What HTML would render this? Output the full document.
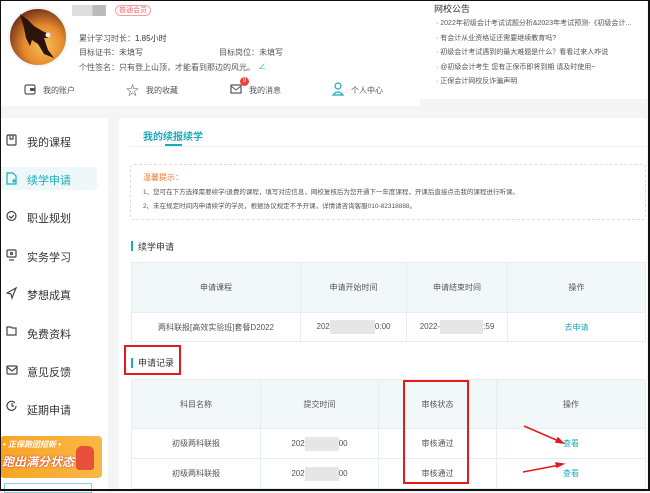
<!DOCTYPE html>
<html><head><meta charset="utf-8"><style>
*{margin:0;padding:0;box-sizing:border-box}
body{width:650px;height:491px;overflow:hidden;background:#f4f5f7;font-family:"Liberation Sans","Noto Sans CJK SC",sans-serif;position:relative;color:#333}
.a{position:absolute}
.t{position:absolute;white-space:nowrap}
.s9{font-size:8px;color:#555}
.tbl{position:absolute;border-collapse:collapse;font-size:8px;color:#555;text-align:center}
.tbl td{border:1px solid #e8eef0}
.tbl tr.h td{background:#f2f8fa}
.blur{display:inline-block;background:#e6e6e6;height:14px;vertical-align:middle}
.side{font-size:11px;color:#333}
</style></head><body>
<!-- header -->
<div class="a" style="left:0;top:0;width:420px;height:106px;background:#fff"></div>
<div class="a" style="left:420px;top:0;width:227px;height:99px;background:#fff"></div>
<div class="a" style="left:8px;top:7px;width:60px;height:60px;border-radius:50%;background:radial-gradient(circle at 60% 65%,#f6c257 0%,#e68a2e 40%,#7a3418 75%,#3b1a10 100%);border:2px solid #eaf6fa;overflow:hidden"></div>
<svg class="a" style="left:14px;top:10px" width="44" height="52"><path d="M6 4 L14 10 L20 16 L30 22 L36 24 L34 28 L30 28 L34 40 L40 48 L30 44 L24 34 L18 30 L16 36 L12 28 L10 18 Z" fill="#2a140c"/><circle cx="34" cy="25" r="2.5" fill="#eee"/></svg>
<div class="a" style="left:72px;top:5px;width:34px;height:11px;background:linear-gradient(90deg,#ddd 60%,#bbb 60%)"></div>
<div class="t" style="left:115px;top:5px;font-size:7px;color:#f06a6a;border:1px solid #f3a0a0;border-radius:7px;padding:0 3px;line-height:9px">普通会员</div>
<div class="t s9" style="left:79px;top:33px">累计学习时长：<span style="color:#333">1.85小时</span></div>
<div class="t s9" style="left:79px;top:47px">目标证书：未填写</div>
<div class="t s9" style="left:219px;top:47px">目标岗位：未填写</div>
<div class="t s9" style="left:79px;top:62px">个性签名：只有登上山顶，才能看到那边的风光。</div>
<div class="t" style="left:258px;top:61px;font-size:8px;color:#1aacbb">∠</div>
<svg class="a" style="left:24px;top:84px" width="12" height="11"><rect x="1" y="1" width="10" height="9" rx="1.5" fill="none" stroke="#555" stroke-width="1.2"/><rect x="6" y="4" width="5" height="3" fill="#555"/></svg>
<div class="t s9" style="left:43px;top:85px">我的账户</div>
<div class="t" style="left:126px;top:80px;font-size:13px;color:#555">☆</div>
<div class="t s9" style="left:146px;top:85px">我的收藏</div>
<svg class="a" style="left:230px;top:84px" width="12" height="10"><rect x="1" y="1" width="10" height="8" fill="none" stroke="#555" stroke-width="1.2"/><path d="M1 2 L6 6 L11 2" fill="none" stroke="#555"/></svg>
<div class="a" style="left:240px;top:77px;width:9px;height:9px;border-radius:50%;background:#f03c3c;color:#fff;font-size:6px;text-align:center;line-height:9px">9</div>
<div class="t s9" style="left:249px;top:85px">我的消息</div>
<svg class="a" style="left:332px;top:82px" width="12" height="14"><circle cx="6" cy="4" r="3" fill="none" stroke="#1aacbb" stroke-width="1.2"/><path d="M1 13 Q6 7 11 13 Z" fill="none" stroke="#1aacbb" stroke-width="1.2"/></svg>
<div class="t s9" style="left:351px;top:85px">个人中心</div>
<div class="t" style="left:434px;top:2px;font-size:9px;color:#333">网校公告</div>
<div class="t" style="left:436px;top:17px;font-size:7px;color:#555;line-height:14.5px">· 2022年初级会计考试试题分析&amp;2023年考试预测-《初级会计...<br>· 有会计从业资格证还需要继续教育吗?<br>· 初级会计考试遇到的最大难题是什么？看看过来人咋说<br>· @初级会计考生 您有正保币即将到期 请及时使用~<br>· 正保会计网校反诈骗声明</div>
<!-- sidebar -->
<div class="a" style="left:0;top:118px;width:108px;height:373px;background:#fff;border-radius:3px"></div>
<div class="a" style="left:0;top:167px;width:97px;height:23px;background:#eef8f9;border-radius:3px"></div>
<div class="t side" style="left:27px;top:134px">我的课程</div>
<div class="t side" style="left:27px;top:172px;color:#1aacbb">续学申请</div>
<div class="t side" style="left:27px;top:210px">职业规划</div>
<div class="t side" style="left:27px;top:249px">实务学习</div>
<div class="t side" style="left:27px;top:287px">梦想成真</div>
<div class="t side" style="left:27px;top:326px">免费资料</div>
<div class="t side" style="left:27px;top:364px">意见反馈</div>
<div class="t side" style="left:27px;top:402px">延期申请</div>
<svg class="a" style="left:6px;top:134px" width="12" height="290" fill="none" stroke="#444" stroke-width="1.2">
<rect x="1" y="1" width="9" height="10" rx="1"/><path d="M4 1v4h3v-4"/>
<path d="M1 39h6l3 3v8h-9z" stroke="#1aacbb"/><path d="M6 47h4M8 45v4" stroke="#1aacbb"/>
<circle cx="5.5" cy="82" r="4.5"/><path d="M3 82l2 2 3-3"/>
<rect x="1" y="116" width="9" height="7" rx="1"/><path d="M3 126h5"/><circle cx="5.5" cy="119.5" r="1"/>
<path d="M10 154L1 159 5 160 6 164z"/>
<path d="M1 193h4l1 1h4v7h-9z"/>
<rect x="1" y="232" width="10" height="8" rx="1"/><path d="M1 233l5 4 5-4"/>
<path d="M10 272a4.5 4.5 0 1 1-1-3M6 269v3h2"/>
</svg>
<div class="a" style="left:0;top:436px;width:102px;height:42px;border-radius:4px;background:linear-gradient(90deg,#f8a425,#f9b846);overflow:hidden">
<div class="t" style="left:3px;top:3px;font-size:8px;color:#fff;font-weight:bold;font-style:italic">• 正保跑团招新 •</div>
<div class="t" style="left:2px;top:17px;font-size:12px;color:#fff;font-weight:bold;font-style:italic;text-shadow:0 0 2px #c23">跑出满分状态</div>
<div class="a" style="left:76px;top:10px;width:18px;height:24px;background:#e8503a;border-radius:6px 6px 3px 3px"></div>
</div>
<div class="a" style="left:4px;top:483px;width:88px;height:10px;border:1px solid #8ccfd7"></div>
<!-- main -->
<div class="a" style="left:119px;top:118px;width:528px;height:373px;background:#fff;border-radius:3px"></div>
<div class="a" style="left:130px;top:146px;width:517px;height:1px;background:#eef0f2"></div>
<div class="t" style="left:143px;top:128px;font-size:10px;color:#1aacbb;font-weight:bold">我的续报续学</div>
<div class="a" style="left:165px;top:144px;width:17px;height:2px;background:#1aacbb"></div>
<div class="a" style="left:130px;top:164px;width:516px;height:56px;border:1px dashed #dcdfe3;border-radius:4px"></div>
<div class="t" style="left:143px;top:172px;font-size:8px;color:#f07b2c">温馨提示：</div>
<div class="t" style="left:143px;top:186px;font-size:6.5px;color:#555">1、您可在下方选择需要续学/退费的课程，填写对应信息，网校复核后为您开通下一年度课程，开课后直接点击我的课程进行听课。</div>
<div class="t" style="left:143px;top:200px;font-size:6.5px;color:#555">2、未在规定时间内申请续学的学员，根据协议规定不予开课，详情请咨询客服010-82318888。</div>
<div class="a" style="left:131px;top:241px;width:2px;height:10px;background:#1aacbb"></div>
<div class="t" style="left:138px;top:240px;font-size:9px;color:#333">续学申请</div>
<table class="tbl" style="left:131px;top:262px;width:515px">
<tr class="h" style="height:50px"><td style="width:169px">申请课程</td><td style="width:106px">申请开始时间</td><td style="width:101px">申请结束时间</td><td>操作</td></tr>
<tr style="height:29px"><td>两科联报[高效实验班]套餐D2022</td><td>202<span class="blur" style="width:45px"></span>0:00</td><td>2022-<span class="blur" style="width:43px"></span>:59</td><td style="color:#1aacbb">去申请</td></tr>
</table>
<div class="a" style="left:124px;top:345px;width:57px;height:30px;border:2px solid #e21b1b"></div>
<div class="a" style="left:131px;top:358px;width:2px;height:10px;background:#1aacbb"></div>
<div class="t" style="left:138px;top:356px;font-size:9px;color:#333">申请记录</div>
<table class="tbl" style="left:131px;top:379px;width:515px">
<tr class="h" style="height:49px"><td style="width:129px">科目名称</td><td style="width:118px">提交时间</td><td style="width:118px">审核状态</td><td>操作</td></tr>
<tr style="height:30px"><td>初级两科联报</td><td>202<span class="blur" style="width:34px"></span>00</td><td>审核通过</td><td style="color:#1aacbb">查看</td></tr>
<tr style="height:30px"><td>初级两科联报</td><td>202<span class="blur" style="width:34px"></span>00</td><td>审核通过</td><td style="color:#1aacbb">查看</td></tr>
</table>
<div class="a" style="left:403px;top:380px;width:66px;height:104px;border:2px solid #e21b1b"></div>
<svg class="a" style="left:515px;top:420px" width="55" height="60"><g stroke="#e21b1b" stroke-width="1.5" fill="#e21b1b"><path d="M9 6L46 22"/><path d="M48 23l-7-1 2-4z"/><path d="M8 52L45 45"/><path d="M48 44l-6 3-1-4z"/></g></svg>
<!-- frame -->
<div class="a" style="left:0;top:0;width:650px;height:491px;border:1px solid #111;border-right-width:2px;border-bottom-width:2px"></div>
</body></html>
